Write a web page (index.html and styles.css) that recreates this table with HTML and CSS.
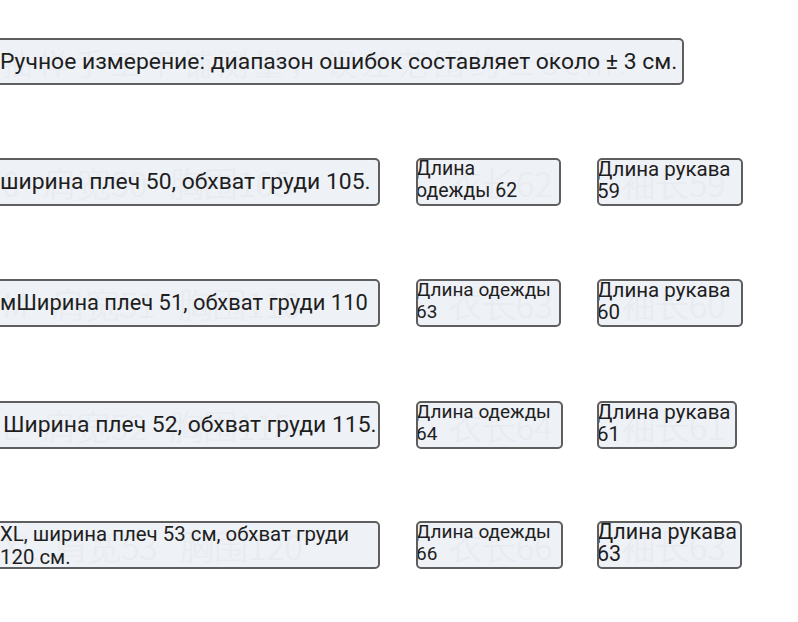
FILE: index.html
```html
<!DOCTYPE html>
<html lang="ru">
<head>
<meta charset="utf-8">
<title>Размеры</title>
<link rel="stylesheet" href="styles.css">
</head>
<body>
<main class="sheet">
  <div class="row row-note">
    <div class="box box-note">
      <span class="ghost ghost-note">抽样手工平铺测量，误差范围约±3cm.</span>
      <span class="txt">Ручное измерение: диапазон ошибок составляет около ± 3 см.</span>
    </div>
  </div>

  <div class="row row-size">
    <div class="box box-main">
      <span class="ghost ghost-main">0&nbsp;&nbsp;&nbsp;肩宽50&nbsp;&nbsp;&nbsp;胸围105</span>
      <span class="txt">ширина плеч 50, обхват груди 105.</span>
    </div>
    <div class="box box-len">
      <span class="ghost ghost-len">衣长62</span>
      <span class="txt small big">Длина<br>одежды 62</span>
    </div>
    <div class="box box-sleeve">
      <span class="ghost ghost-sl">袖长59</span>
      <span class="txt small sl">Длина рукава<br>59</span>
    </div>
  </div>

  <div class="row row-size">
    <div class="box box-main">
      <span class="ghost ghost-main">M&nbsp;&nbsp;&nbsp;肩宽51&nbsp;&nbsp;&nbsp;胸围110</span>
      <span class="txt tight">мШирина плеч 51, обхват груди 110</span>
    </div>
    <div class="box box-len">
      <span class="ghost ghost-len">衣长63</span>
      <span class="txt small">Длина одежды<br>63</span>
    </div>
    <div class="box box-sleeve">
      <span class="ghost ghost-sl">袖长60</span>
      <span class="txt small sl">Длина рукава<br>60</span>
    </div>
  </div>

  <div class="row row-size">
    <div class="box box-main">
      <span class="ghost ghost-main">L&nbsp;&nbsp;&nbsp;肩宽52&nbsp;&nbsp;&nbsp;胸围115</span>
      <span class="txt pad-l">Ширина плеч 52, обхват груди 115.</span>
    </div>
    <div class="box box-len wide">
      <span class="ghost ghost-len">衣长64</span>
      <span class="txt small">Длина одежды<br>64</span>
    </div>
    <div class="box box-sleeve narrow">
      <span class="ghost ghost-sl">袖长61</span>
      <span class="txt small sl">Длина рукава<br>61</span>
    </div>
  </div>

  <div class="row row-size">
    <div class="box box-main">
      <span class="ghost ghost-main">XL&nbsp;&nbsp;肩宽53&nbsp;&nbsp;&nbsp;胸围120</span>
      <span class="txt two">XL, ширина плеч 53 см, обхват груди<br>120 см.</span>
    </div>
    <div class="box box-len wide">
      <span class="ghost ghost-len">衣长66</span>
      <span class="txt small">Длина одежды<br>66</span>
    </div>
    <div class="box box-sleeve last">
      <span class="ghost ghost-sl">袖长63</span>
      <span class="txt small large">Длина рукава<br>63</span>
    </div>
  </div>
</main>
</body>
</html>
```

FILE: styles.css
```css
* { box-sizing: border-box; }

html, body {
  margin: 0;
  padding: 0;
  background: #ffffff;
  overflow: hidden;
}

body {
  font-family: Roboto, "Liberation Sans", Arial, sans-serif;
  color: #1e1e1e;
  width: 798px;
  height: 622px;
}

.sheet {
  display: grid;
  grid-template-rows: 120px 121px 122px 120px 48px;
  padding-top: 38px;
}

.row {
  display: flex;
  align-items: flex-start;
  height: 48px;
}

.box {
  position: relative;
  height: 48px;
  background: #eef1f6;
  border: 2px solid #5e5e5e;
  border-radius: 5px;
  overflow: hidden;
}

.box-note {
  margin-left: -6px;
  width: 690px;
  display: flex;
  align-items: center;
  padding-left: 4px;
  height: 47px;
}

.box-main {
  margin-left: -8px;
  width: 388px;
  display: flex;
  align-items: center;
  padding-left: 6px;
}

.box-len {
  margin-left: 36px;
  width: 145px;
}

.box-len.wide { width: 147px; }

.box-sleeve {
  margin-left: 36px;
  width: 146px;
}

.box-sleeve.narrow { width: 140px; margin-left: 34px; }

.box-sleeve.last { margin-left: 34px; width: 145px; }

.ghost {
  position: absolute;
  top: 50%;
  transform: translateY(-50%);
  color: #e8ebef;
  white-space: nowrap;
  font-family: "Noto Sans CJK SC", "Noto Sans", sans-serif;
  font-weight: 300;
  z-index: 0;
}

.ghost-note {
  left: 6px;
  font-size: 30px;
  letter-spacing: 6px;
}

.ghost-main {
  left: 8px;
  font-size: 34px;
}

.ghost-len {
  left: 30px;
  font-size: 34px;
}

.ghost-sl {
  left: 22px;
  font-size: 34px;
}

.txt {
  position: relative;
  z-index: 1;
  font-size: 22.9px;
  white-space: nowrap;
  line-height: 1.2;
}

.txt.tight { font-size: 21.9px; }

.txt.pad-l { padding-left: 3px; }

.txt.two {
  font-size: 20.4px;
  line-height: 23px;
  white-space: nowrap;
  padding-top: 1px;
}

.txt.small {
  display: block;
  font-size: 19px;
  line-height: 22px;
  margin-top: -2px;
  margin-left: -2px;
}

.txt.small.big { font-size: 19.5px; }

.txt.small.sl { font-size: 20.5px; line-height: 22px; }

.txt.small.large {
  font-size: 21.5px;
  line-height: 22px;
  margin-top: -2px;
  margin-left: -2px;
}
```
